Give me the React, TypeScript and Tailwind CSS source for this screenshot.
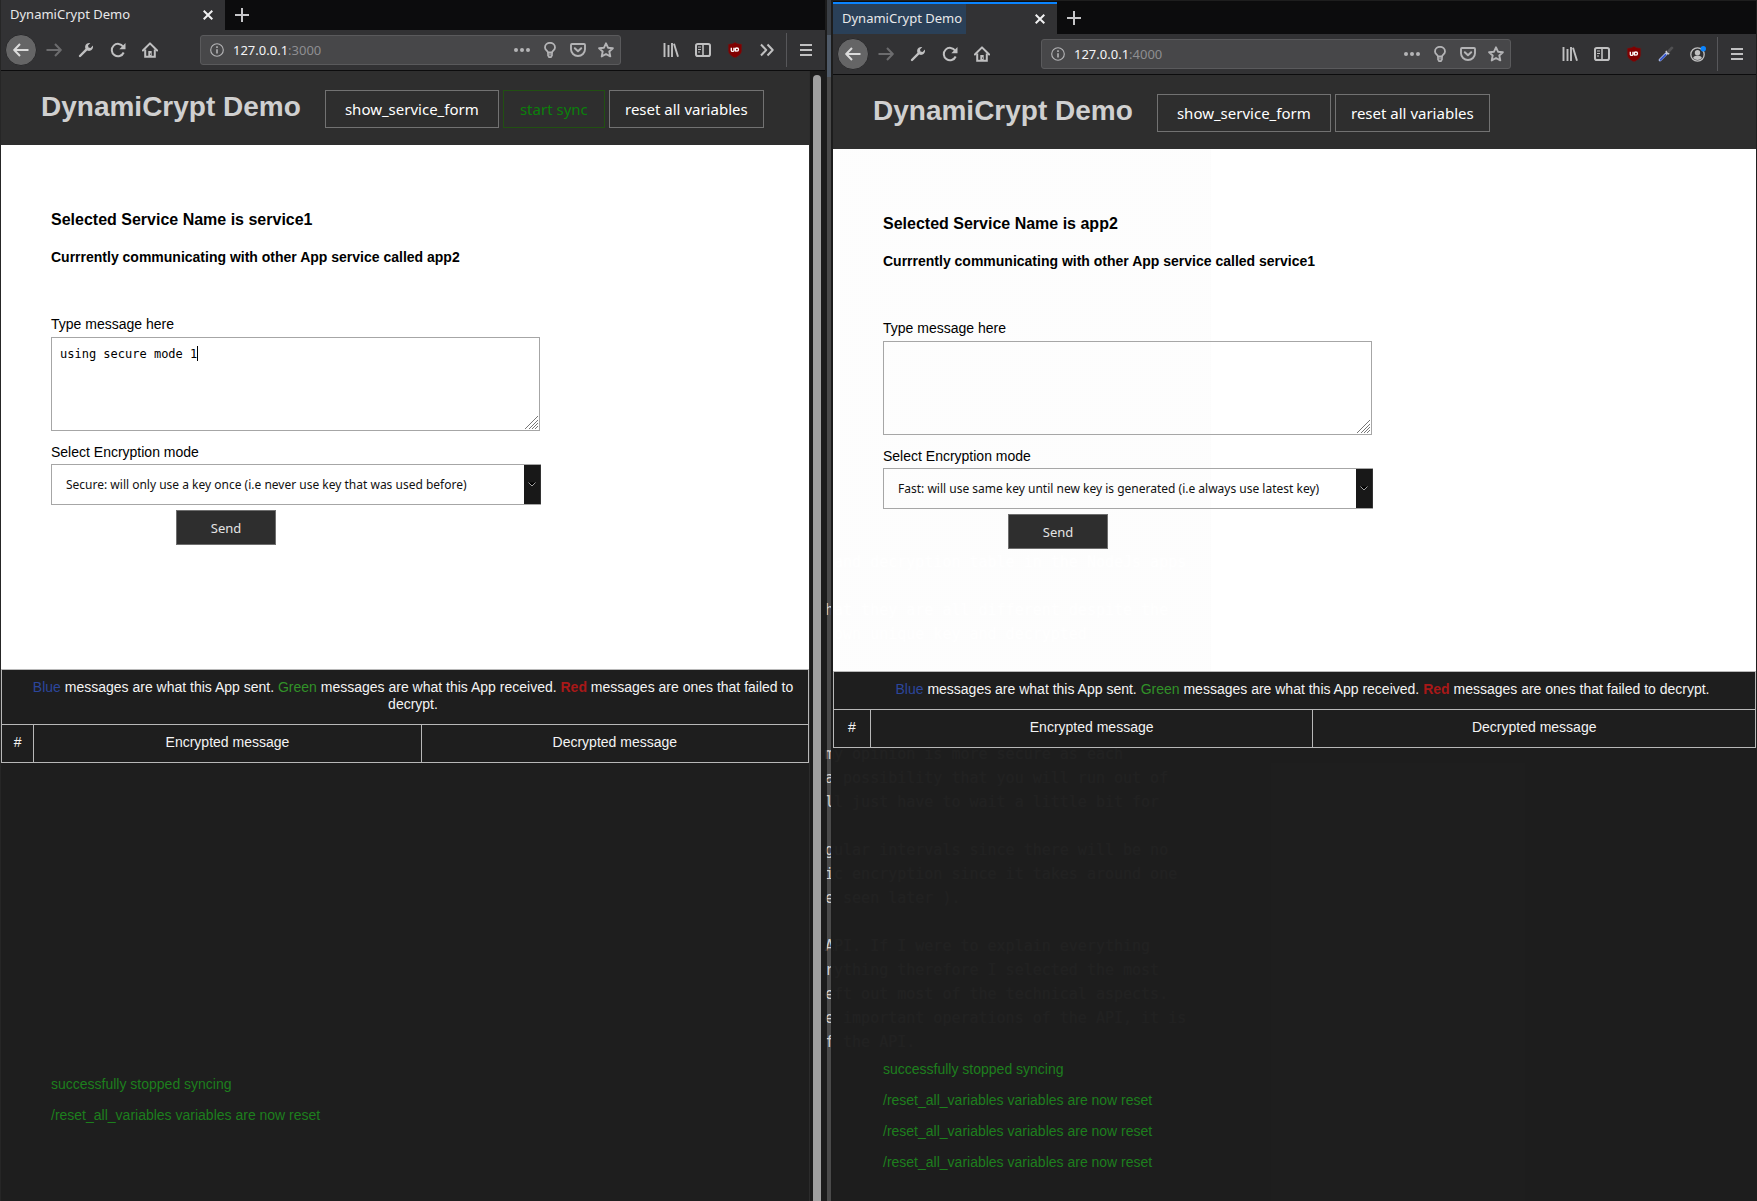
import type { ReactNode } from "react";

const UI = "font-['Noto_Sans',sans-serif]";
const HELV = "font-['Liberation_Sans',Arial,sans-serif]";

function Svg({ children, size = 16 }: { children: ReactNode; size?: number }) {
  return (
    <svg width={size} height={size} viewBox="0 0 16 16" fill="none" stroke="currentColor" strokeWidth="2" aria-hidden="true">
      {children}
    </svg>
  );
}

const BackIcon = () => (
  <Svg><path d="M15.5 8H1.5M7 2 1.2 8 7 14" strokeLinejoin="round" /></Svg>
);
const ForwardIcon = () => (
  <Svg><path d="M.5 8h14M9 2l5.8 6L9 14" strokeLinejoin="round" /></Svg>
);
const WrenchIcon = () => (
  <Svg>
    <path d="M2 14 8.6 7.4" strokeWidth="2.4" strokeLinecap="round" />
    <path d="M14.9 3.6 12.6 6l-2.1-.6L10 3.4l2.300-2.400C10.300.5 7.700 1.600 7.200 4c-.2 1 0 1.900.2 2.600l2 2c.8.3 1.700.400 2.600.200 2.400-.5 3.500-3 2.900-5.200z" fill="currentColor" stroke="none" />
  </Svg>
);
const ReloadIcon = () => (
  <Svg>
    <path d="M13.200 4.700A6.200 6.200 0 1 0 13.700 10.500" />
    <path d="M15.500 1v6.200H9.300z" fill="currentColor" stroke="none" />
  </Svg>
);
const HomeIcon = () => (
  <Svg>
    <path d="M.9 8.500 8 1.400l7.100 7.100" strokeLinejoin="round" strokeLinecap="round" />
    <path d="M3.200 7.500V14.800h9.600V7.500" />
    <path d="M6.300 9h3.400v6H6.300z" fill="currentColor" stroke="none" />
    <path d="M8 11.500h.9v1.200H8z" fill="#323234" stroke="none" />
  </Svg>
);
const InfoIcon = () => (
  <Svg size={14}>
    <circle cx="8" cy="8" r="7.200" strokeWidth="1.300" />
    <path d="M8 7v5M8 3.800v1.800" strokeWidth="1.800" />
  </Svg>
);
const DotsIcon = () => (
  <Svg><g fill="currentColor" stroke="none"><circle cx="2" cy="8" r="2" /><circle cx="8" cy="8" r="2" /><circle cx="14" cy="8" r="2" /></g></Svg>
);
const BulbIcon = () => (
  <Svg>
    <path d="M6 10.500C5.700 8.800 3 8 3 5.400a5 4.600 0 0 1 10 0c0 2.600-2.700 3.400-3 5.100z" strokeWidth="1.800" />
    <path d="M5.200 10.500h5.600v3.300L9.400 16H6.600l-1.400-2.200z" fill="currentColor" stroke="none" />
    <path d="M6.700 12h2.600M6.900 13.700h2.200" stroke="#4a4a4c" strokeWidth=".8" />
  </Svg>
);
const PocketIcon = () => (
  <Svg>
    <path d="M2 2h12c.6 0 1 .4 1 1v4.200a7 6.800 0 0 1-14 0V3c0-.6.4-1 1-1z" strokeWidth="1.900" />
    <path d="m4.800 6.300 3.200 3 3.200-3" strokeLinecap="round" strokeLinejoin="round" />
  </Svg>
);
const StarIcon = () => (
  <Svg><path d="m8 1.300 2 4.400 4.900.5-3.600 3.300 1 4.900L8 12l-4.300 2.400 1-4.900L1.100 6.200l4.900-.5z" strokeLinejoin="round" strokeWidth="1.900" /></Svg>
);
const LibraryIcon = () => (
  <Svg><path d="M1.500 1v14M5.500 3v12M9 1v14M11 1.700l4 13" strokeWidth="1.900" /></Svg>
);
const SidebarIcon = () => (
  <Svg>
    <rect x="1" y="2" width="14" height="12" rx="1.800" />
    <path d="M8 2v12" strokeWidth="1.600" />
    <path d="M3 5h3M3 7.500h3M3 10h2" strokeWidth="1" />
  </Svg>
);
const ShieldIcon = () => (
  <Svg>
    <path d="M8 .3c2 1.500 4.500 1.900 6.700 1.900v6.300c0 3.600-3.500 5.900-6.700 7.300-3.200-1.400-6.700-3.700-6.700-7.300V2.200C3.500 2.200 6 1.800 8 .3z" fill="#800000" stroke="#5e2222" strokeWidth=".5" />
    <path d="M4.300 5.800v2.600c0 1.400 2.600 1.400 2.600 0V5.800M8.400 5.800v3.600" stroke="#fff" strokeWidth="1.300" />
    <circle cx="9.900" cy="7.600" r="1.600" stroke="#fff" strokeWidth="1.300" />
  </Svg>
);
const ChevronsIcon = () => (
  <Svg><path d="m2 2.500 5.200 5.500L2 13.500M8.500 2.500l5.200 5.500-5.200 5.500" strokeLinejoin="round" /></Svg>
);
const DropperIcon = () => (
  <Svg>
    <path d="m2 14 7-7" stroke="#b9c6ee" strokeWidth="2.800" strokeLinecap="round" />
    <path d="m2.500 13.800 5-5" stroke="#3456cc" strokeWidth="1.800" strokeLinecap="round" />
    <path d="m7.800 5 3.300 3.300" stroke="#c8c8c8" strokeWidth="1.600" />
    <path d="m10.500 5.500 3.400-3.600" stroke="#505052" strokeWidth="2.800" strokeLinecap="round" />
  </Svg>
);
const AvatarIcon = () => (
  <Svg>
    <circle cx="7.500" cy="8.500" r="6.700" strokeWidth="1.300" />
    <circle cx="7.500" cy="6.800" r="2.700" fill="currentColor" stroke="none" />
    <path d="M3 12c1-2 2.600-2.200 4.500-2.200S11 10 12 12c-2.500 2.500-6.500 2.500-9 0z" fill="currentColor" stroke="none" />
    <circle cx="13.300" cy="2.700" r="2.700" fill="#0a84ff" stroke="none" />
  </Svg>
);
const MenuIcon = () => (
  <Svg><path d="M2 3h12M2 8h12M2 13h12" /></Svg>
);

function IconButton({ label, children, dim }: { label: string; children: ReactNode; dim?: boolean }) {
  return (
    <button aria-label={label} className={`flex h-8 w-8 shrink-0 items-center justify-center ${dim ? "text-[#6c6c6e]" : "text-[#c0c0c1]"}`}>
      {children}
    </button>
  );
}

function Tab({ active }: { active?: boolean }) {
  return (
    <div className={`flex bg-[#0c0c0d] ${active ? "mt-px h-[33px] pt-px" : "h-[30px]"}`}>
      <div className={`flex w-56 items-center bg-[#323234] ${active ? "border-t-2 border-[#0a84ff]" : ""}`}>
        <span className={`flex w-[133px] items-center self-stretch pl-[9px] text-[13px] text-[#e8e8ea] ${UI} ${active ? "bg-[#2a4058]" : ""}`}>
          DynamiCrypt Demo
        </span>
        <button aria-label="Close tab" className="ml-auto flex h-5 w-[34px] items-center justify-center text-[#f0f0f1]">
          <svg width="10" height="10" viewBox="0 0 10 10" stroke="currentColor" strokeWidth="2" aria-hidden="true"><path d="m.7.7 8.600 8.600M9.300.7.7 9.300" /></svg>
        </button>
      </div>
      <button aria-label="New tab" className="flex w-[34px] items-center justify-center text-[#c6c6c8]">
        <svg width="14" height="14" viewBox="0 0 14 14" stroke="currentColor" strokeWidth="2" aria-hidden="true"><path d="M7 0v14M0 7h14" /></svg>
      </button>
    </div>
  );
}

function Toolbar({ port, second }: { port: string; second?: boolean }) {
  return (
    <div className="flex h-[41px] items-center border-b border-[#0c0c0d] bg-[#323234] pr-[3px] pl-1">
      <button aria-label="Back" className="mr-px flex h-8 w-8 shrink-0 items-center justify-center rounded-full border border-[#29292b] bg-[#656566] text-[#dcdcdc]">
        <BackIcon />
      </button>
      <IconButton label="Forward" dim><ForwardIcon /></IconButton>
      <IconButton label="Developer tools"><WrenchIcon /></IconButton>
      <IconButton label="Reload"><ReloadIcon /></IconButton>
      <IconButton label="Home"><HomeIcon /></IconButton>
      <div className={`flex h-[30px] min-w-0 flex-1 items-center rounded-[3px] border border-[#5a5a5c] bg-[#474749] pl-[9px] text-[#b4b4b6] ${second ? "mx-[43px]" : "mx-[34px]"}`}>
        <InfoIcon />
        <span className={`ml-[9px] flex-1 pt-0.5 text-[13px] text-[#8e8e91] ${UI}`}>
          <span className="text-[#f4f4f5]">127.0.0.1</span>:{port}
        </span>
        <button aria-label="Page actions" className="flex w-7 justify-center"><DotsIcon /></button>
        <button aria-label="Tips" className="flex w-7 justify-center"><BulbIcon /></button>
        <button aria-label="Save to Pocket" className="flex w-7 justify-center"><PocketIcon /></button>
        <button aria-label="Bookmark" className="flex w-7 justify-center"><StarIcon /></button>
      </div>
      <IconButton label="Library"><LibraryIcon /></IconButton>
      <IconButton label="Sidebars"><SidebarIcon /></IconButton>
      <IconButton label="Blocker"><ShieldIcon /></IconButton>
      {second ? (
        <>
          <IconButton label="Color picker"><DropperIcon /></IconButton>
          <IconButton label="Account"><AvatarIcon /></IconButton>
        </>
      ) : (
        <IconButton label="More tools"><ChevronsIcon /></IconButton>
      )}
      <span className="mx-[3px] h-[34px] w-px bg-[#57575a]" />
      <IconButton label="Menu"><MenuIcon /></IconButton>
    </div>
  );
}

function HeaderButton({ children, look }: { children: ReactNode; look: string }) {
  return (
    <button className={`h-[38px] shrink-0 border text-[15px] leading-6 whitespace-nowrap ${UI} ${look}`}>
      {children}
    </button>
  );
}

type DemoProps = {
  id: string;
  name: string;
  other: string;
  message: string;
  mode: string;
  sync?: boolean;
  log: string[];
};

function DemoPage({ id, name, other, message, mode, sync, log }: DemoProps) {
  const second = !sync;
  return (
    <main className={`flex min-w-0 flex-1 flex-col text-[14px] leading-4 ${HELV}`}>
      <header className="flex h-[74px] items-start gap-1 bg-[#2e2e2e] pt-[19px] pl-10">
        <h1 className="mr-5 text-[28px] leading-[34px] font-bold whitespace-nowrap text-[#d0d0d0]">DynamiCrypt Demo</h1>
        <HeaderButton look="w-[174px] border-[#727272] text-white">show_service_form</HeaderButton>
        {sync && <HeaderButton look="w-[102px] border-[#215012] text-[#0b800b]">start sync</HeaderButton>}
        <HeaderButton look="w-[155px] border-[#727272] text-white">reset all variables</HeaderButton>
      </header>

      <section className={`pt-16 pl-[50px] text-black ${second ? "min-h-[522px] bg-linear-to-r from-white/99 from-41% to-white to-41%" : "min-h-[524px] bg-white"}`}>
        <h3 className="text-[16px] leading-[22px] font-bold">Selected Service Name is {name}</h3>
        <h4 className="mt-[18px] font-bold">Currrently communicating with other App service called {other}</h4>
        <form className="mt-[51px] w-[490px]" onSubmit={(e) => e.preventDefault()}>
          <label htmlFor={`${id}-msg`} className="block">Type message here</label>
          <div className="relative mt-[5px] mr-px">
            <textarea
              id={`${id}-msg`}
              defaultValue={message}
              className="block h-[94px] w-full resize-none border border-[#a6a6a6] p-2 font-['DejaVu_Sans_Mono',monospace] text-[12px] leading-4 outline-none"
            />
            {message && <span className="absolute top-[9px] left-[146px] h-[15px] w-px bg-black" />}
            <svg className="absolute right-0.5 bottom-0.5" width="13" height="13" viewBox="0 0 13 13" stroke="#777" strokeWidth="1" aria-hidden="true">
              <path d="M0 13 13 0M4 13l9-9M7 13l6-6M10 13l3-3" />
            </svg>
          </div>
          <label htmlFor={`${id}-mode`} className="mt-[13px] block">Select Encryption mode</label>
          <div className="relative mt-1">
            <select id={`${id}-mode`} className={`block h-[41px] w-full appearance-none border border-[#a6a6a6] pr-5 pl-[14px] text-[12px] text-[#111] ${UI}`}>
              <option>{mode}</option>
            </select>
            <span className="pointer-events-none absolute top-px right-0 flex h-[39px] w-[17px] items-center justify-center border-r border-[#333] bg-[#181818]">
              <svg width="8" height="5" viewBox="0 0 8 5" fill="#000" stroke="#a0a0a0" strokeWidth="1" aria-hidden="true"><path d="m.5.5 3.500 3.500L7.500.5" /></svg>
            </span>
          </div>
          <button type="submit" className={`mt-[5px] ml-[125px] block h-[35px] w-[100px] border border-[#6e6e6e] bg-[#2e2e2e] text-[13px] text-[#e4e4e4] ${UI}`}>
            Send
          </button>
        </form>
      </section>

      <table className={`w-full table-fixed border-collapse text-center leading-[17px] text-[#f4f4f4] ${second ? "bg-[#1e1e1e]" : ""}`}>
        <colgroup>
          <col className="w-[4%]" />
          <col className="w-[48%]" />
          <col className="w-[48%]" />
        </colgroup>
        <thead>
          <tr>
            <td colSpan={3} className="border border-[#b8b8b8] pt-[9px] pr-0 pb-[11px] pl-4">
              <span className="text-[#2c469c]">Blue</span> messages are what this App sent.{" "}
              <span className="text-[#319128]">Green</span> messages are what this App received.{" "}
              <b className="text-[#a81818]">Red</b> messages are ones that failed to decrypt.
            </td>
          </tr>
          <tr>
            <th className="border border-[#b8b8b8] pt-[9px] pb-[11px] font-normal">#</th>
            <th className="border border-[#b8b8b8] pt-[9px] pb-[11px] font-normal">Encrypted message</th>
            <th className="border border-[#b8b8b8] pt-[9px] pb-[11px] font-normal">Decrypted message</th>
          </tr>
        </thead>
      </table>

      <div className={`flex flex-1 flex-col justify-end gap-[15px] pl-[50px] text-[#1d7f1d] ${second ? "bg-[#1e1e1e]/98 pb-[31px]" : "pb-[78px]"}`}>
        {log.map((line, i) => (
          <p key={i}>{line}</p>
        ))}
      </div>
    </main>
  );
}

/* Paragraphs of the editor lying behind the translucent browser window. */
const BACKDROP = [
  { gap: "mb-6", lines: [" and decryption table in the NodeJs apps"] },
  { gap: "mb-24", lines: ["hat they are all different despite the", " own unique key and decrypted"] },
  {
    gap: "mb-6",
    lines: ["my opinion is more secure as each", "a possibility that you will run out of", "ll just have to wait a little bit for"],
  },
  {
    gap: "mb-6",
    lines: ["gular intervals since there will be no", "ic encryption since it takes around one", "e seen later )."],
  },
  {
    gap: "",
    lines: [
      "API. If I were to explain everything",
      "rything therefore I selected the most",
      "eft out most of the technical aspects.",
      "e important operations of the API, it is",
      "f the API.",
    ],
  },
];

export default function App() {
  return (
    <div className="grid min-h-screen grid-cols-[825fr_8px_923fr_1px] bg-[#1e1e1e]">
      <div className="flex min-w-0 flex-col border-l border-[#262626]">
        <Tab />
        <Toolbar port="3000" />
        <div className="flex flex-1">
          <DemoPage
            id="left"
            name="service1"
            other="app2"
            message="using secure mode 1"
            mode="Secure: will only use a key once (i.e never use key that was used before)"
            sync
            log={["successfully stopped syncing", "/reset_all_variables variables are now reset"]}
          />
          <div className="flex w-4 border-l border-[#2c2c2c] bg-[#1c1c1c] pt-1 pl-[3px]">
            <div className="w-2 rounded-t-full bg-[#a0a0a0]" />
          </div>
        </div>
      </div>

      <div className="relative">
        <div className="ml-0.5 h-full w-1 bg-[#4a4a4a]">
          <div className="h-[77px] bg-linear-to-b from-[#3a3f45] from-46% to-[#4f5a68] to-46%" />
        </div>
        <div aria-hidden="true" className="absolute top-[550px] left-0 text-[#d0d0d0]">
          {BACKDROP.map(({ gap, lines }) => (
            <pre key={lines[0]} className={`font-['DejaVu_Sans_Mono',monospace] text-[15px] leading-6 ${gap}`}>
              {lines.join("\n")}
            </pre>
          ))}
        </div>
        <div className="absolute inset-y-0 left-0 w-0.5 bg-[#1c1c1c]/80" />
        <div className="absolute inset-y-0 right-0 w-0.5 bg-[#1c1c1c]" />
      </div>

      <div className="relative flex min-w-0 flex-col">
        <Tab active />
        <Toolbar port="4000" second />
        <DemoPage
          id="right"
          name="app2"
          other="service1"
          message=""
          mode="Fast: will use same key until new key is generated (i.e always use latest key)"
          log={[
            "successfully stopped syncing",
            "/reset_all_variables variables are now reset",
            "/reset_all_variables variables are now reset",
            "/reset_all_variables variables are now reset",
          ]}
        />
      </div>
    </div>
  );
}
